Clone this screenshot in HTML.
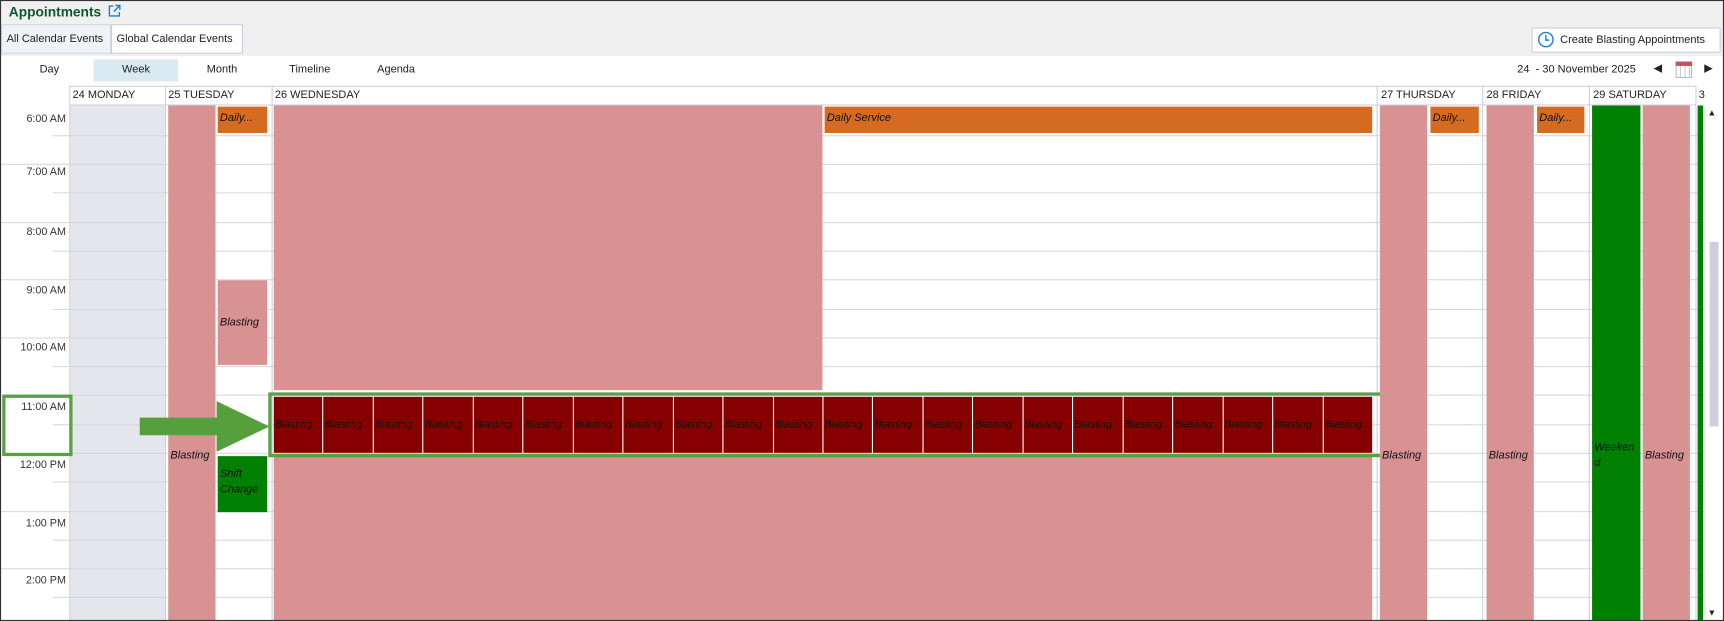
<!DOCTYPE html>
<html><head><meta charset="utf-8"><style>
html,body{margin:0;padding:0;width:1724px;height:621px;overflow:hidden;background:#fff}
#w{position:absolute;left:0;top:0;width:1568px;height:565px;transform:scale(1.09949,1.0991);transform-origin:0 0;font-family:"Liberation Sans",sans-serif;font-size:10px;color:#222}
.a{position:absolute;box-sizing:border-box}
.ev{position:absolute;box-sizing:border-box;font-style:italic;font-size:10px;color:#111;overflow:hidden;white-space:nowrap;padding-left:2px}
.pk{background:#d89292}.or{background:#d46b21}.gr{background:#008000}
.hl{position:absolute;left:63px;right:18px;height:1px;background:#d7d7e2}
.tl{position:absolute;left:0;width:60px;text-align:right;font-size:9.8px;color:#333}
.hd{position:absolute;top:81px;font-size:10px;color:#222}
.vb{position:absolute;top:78px;width:1px;height:487px;background:#d0d0dc}
.tb{position:relative;flex:1;background:#870000;margin-right:1px;line-height:51px;padding-left:1px;font-size:9.6px}
</style></head><body><div id="w">
<div class="a" style="left:0;top:0;width:1568px;height:51px;background:#f0f0f0"></div>
<div class="a" style="left:0;top:0;width:1568px;height:565px;border:1px solid #333;z-index:50;pointer-events:none"></div>
<div class="a" style="left:8px;top:4px;font-weight:bold;font-size:12.5px;color:#0d5a2c">Appointments</div>
<svg class="a" style="left:98px;top:4px" width="12" height="12" viewBox="0 0 12 12"><path d="M5 1.5H1.5v9h9V7" fill="none" stroke="#1e7fc6" stroke-width="1.3"/><path d="M7 1h4v4M11 1L5.5 6.5" fill="none" stroke="#1e7fc6" stroke-width="1.3"/></svg>
<div class="a" style="left:1px;top:22px;width:100px;height:27px;background:#eef3f6;border:1px solid #d4d8e4;font-size:10px;line-height:25px;padding-left:4px">All Calendar Events</div>
<div class="a" style="left:101px;top:22px;width:120px;height:27px;background:#fff;border:1px solid #c9cde0;font-size:10px;line-height:25px;padding-left:4px">Global Calendar Events</div>
<div class="a" style="left:1393px;top:25px;width:172px;height:23px;background:#fff;border:1px solid #c9cde0;font-size:10px;line-height:21px;padding-left:25px">Create Blasting Appointments</div>
<svg class="a" style="left:1398px;top:28px" width="16" height="16" viewBox="0 0 16 16"><circle cx="8" cy="8" r="6.5" fill="none" stroke="#1e7fc6" stroke-width="1.3"/><path d="M8 4v4.5h3" fill="none" stroke="#1e7fc6" stroke-width="1.3"/></svg>
<div class="a" style="left:85px;top:54px;width:77px;height:20px;background:#daeaf2"></div>
<div class="a" style="left:36px;top:58px">Day</div>
<div class="a" style="left:111px;top:58px">Week</div>
<div class="a" style="left:188px;top:58px">Month</div>
<div class="a" style="left:263px;top:58px">Timeline</div>
<div class="a" style="left:343px;top:58px">Agenda</div>
<div class="a" style="left:1380px;top:58px">24 &nbsp;- 30 November 2025</div>
<div class="a" style="left:1504px;top:57px;font-size:10px">◀</div>
<div class="a" style="left:1524px;top:56px;width:15px;height:15px;border:1px solid #bbb;background:repeating-linear-gradient(90deg,#fff 0 3px,#ccc 3px 4px)"></div>
<div class="a" style="left:1524px;top:56px;width:15px;height:4px;background:#c9505a"></div>
<div class="a" style="left:1550px;top:57px;font-size:10px">▶</div>
<div class="a" style="left:63px;top:78px;width:1480px;height:1px;background:#d0d0dc"></div>
<div class="a" style="left:63px;top:95px;width:1480px;height:1px;background:#d0d0dc"></div>
<div class="a" style="left:64px;top:96px;width:86px;height:469px;background:#e5e6ec"></div>
<div class="hl" style="top:149px"></div><div class="hl" style="top:202px"></div><div class="hl" style="top:254px"></div><div class="hl" style="top:307px"></div><div class="hl" style="top:359px"></div><div class="hl" style="top:412px"></div><div class="hl" style="top:465px"></div><div class="hl" style="top:517px"></div>
<div class="hl" style="top:123px;left:48px"></div><div class="hl" style="top:175px;left:48px"></div><div class="hl" style="top:228px;left:48px"></div><div class="hl" style="top:281px;left:48px"></div><div class="hl" style="top:333px;left:48px"></div><div class="hl" style="top:386px;left:48px"></div><div class="hl" style="top:438px;left:48px"></div><div class="hl" style="top:491px;left:48px"></div><div class="hl" style="top:543px;left:48px"></div>
<div class="a" style="left:1px;top:149px;width:62px;height:1px;background:#d7d7e2"></div>
<div class="a" style="left:1px;top:202px;width:62px;height:1px;background:#d7d7e2"></div>
<div class="a" style="left:1px;top:254px;width:62px;height:1px;background:#d7d7e2"></div>
<div class="a" style="left:1px;top:307px;width:62px;height:1px;background:#d7d7e2"></div>
<div class="a" style="left:1px;top:465px;width:62px;height:1px;background:#d7d7e2"></div>
<div class="a" style="left:1px;top:517px;width:62px;height:1px;background:#d7d7e2"></div>
<div class="vb" style="left:63px"></div><div class="vb" style="left:150px"></div><div class="vb" style="left:247px"></div><div class="vb" style="left:1252px"></div><div class="vb" style="left:1348px"></div><div class="vb" style="left:1445px"></div><div class="vb" style="left:1542px"></div>
<div class="hd" style="left:66px">24 MONDAY</div><div class="hd" style="left:153px">25 TUESDAY</div><div class="hd" style="left:250px">26 WEDNESDAY</div><div class="hd" style="left:1256px">27 THURSDAY</div><div class="hd" style="left:1352px">28 FRIDAY</div><div class="hd" style="left:1449px">29 SATURDAY</div><div class="hd" style="left:1545px">3</div>
<div class="tl" style="top:103px">6:00 AM</div><div class="tl" style="top:151px">7:00 AM</div><div class="tl" style="top:206px">8:00 AM</div><div class="tl" style="top:259px">9:00 AM</div><div class="tl" style="top:311px">10:00 AM</div><div class="tl" style="top:365px">11:00 AM</div><div class="tl" style="top:418px">12:00 PM</div><div class="tl" style="top:471px">1:00 PM</div><div class="tl" style="top:523px">2:00 PM</div>
<div class="ev pk" style="left:153px;top:96px;width:43px;height:469px;padding-top:313px">Blasting</div>
<div class="ev or" style="left:198px;top:97px;width:45px;height:24px;line-height:22px">Daily...</div>
<div class="ev pk" style="left:198px;top:255px;width:45px;height:77px;line-height:77px">Blasting</div>
<div class="ev gr" style="left:198px;top:415px;width:45px;height:51px;padding-top:10px;white-space:normal;line-height:14px">Shift Change</div>
<div class="ev pk" style="left:249px;top:96px;width:499px;height:259px"></div>
<div class="ev pk" style="left:249px;top:415px;width:999px;height:150px"></div>
<div class="ev or" style="left:750px;top:97px;width:498px;height:24px;line-height:22px">Daily Service</div>
<div class="a" style="left:249px;top:361px;width:999px;height:51px;display:flex;background:#fff">
<div class="ev tb">Blasting</div><div class="ev tb">Blasting</div><div class="ev tb">Blasting</div><div class="ev tb">Blasting</div><div class="ev tb">Blasting</div><div class="ev tb">Blasting</div><div class="ev tb">Blasting</div><div class="ev tb">Blasting</div><div class="ev tb">Blasting</div><div class="ev tb">Blasting</div><div class="ev tb">Blasting</div><div class="ev tb">Blasting</div><div class="ev tb">Blasting</div><div class="ev tb">Blasting</div><div class="ev tb">Blasting</div><div class="ev tb">Blasting</div><div class="ev tb">Blasting</div><div class="ev tb">Blasting</div><div class="ev tb">Blasting</div><div class="ev tb">Blasting</div><div class="ev tb">Blasting</div><div class="ev tb" style="margin-right:0">Blasting</div>
</div>
<div class="a" style="left:244px;top:357px;width:1016px;height:59px;border:3px solid #5aa046"></div>
<div class="a" style="left:2px;top:359px;width:64px;height:56px;border:3px solid #5aa046"></div>
<svg class="a" style="left:127px;top:365px" width="119" height="47"><path d="M0 15H70V0L118 23L70 46V31H0Z" fill="#55a03c"/></svg>
<div class="ev pk" style="left:1255px;top:96px;width:43px;height:469px;padding-top:313px">Blasting</div>
<div class="ev or" style="left:1301px;top:97px;width:44px;height:24px;line-height:22px">Daily...</div>
<div class="ev pk" style="left:1352px;top:96px;width:43px;height:469px;padding-top:313px">Blasting</div>
<div class="ev or" style="left:1398px;top:97px;width:43px;height:24px;line-height:22px">Daily...</div>
<div class="ev gr" style="left:1448px;top:96px;width:44px;height:469px;padding-top:305px;white-space:normal;line-height:14px;word-break:break-all">Weekend</div>
<div class="ev pk" style="left:1494px;top:96px;width:43px;height:469px;padding-top:313px">Blasting</div>
<div class="a gr" style="left:1544px;top:96px;width:5px;height:469px"></div>
<div class="a" style="left:1550px;top:96px;width:17px;height:469px;background:#fff"></div>
<div class="a" style="left:1553px;top:98px;font-size:8px">▲</div>
<div class="a" style="left:1553px;top:553px;font-size:8px">▼</div>
<div class="a" style="left:1555px;top:220px;width:8px;height:168px;background:#cdd0dc"></div>
</div></body></html>
